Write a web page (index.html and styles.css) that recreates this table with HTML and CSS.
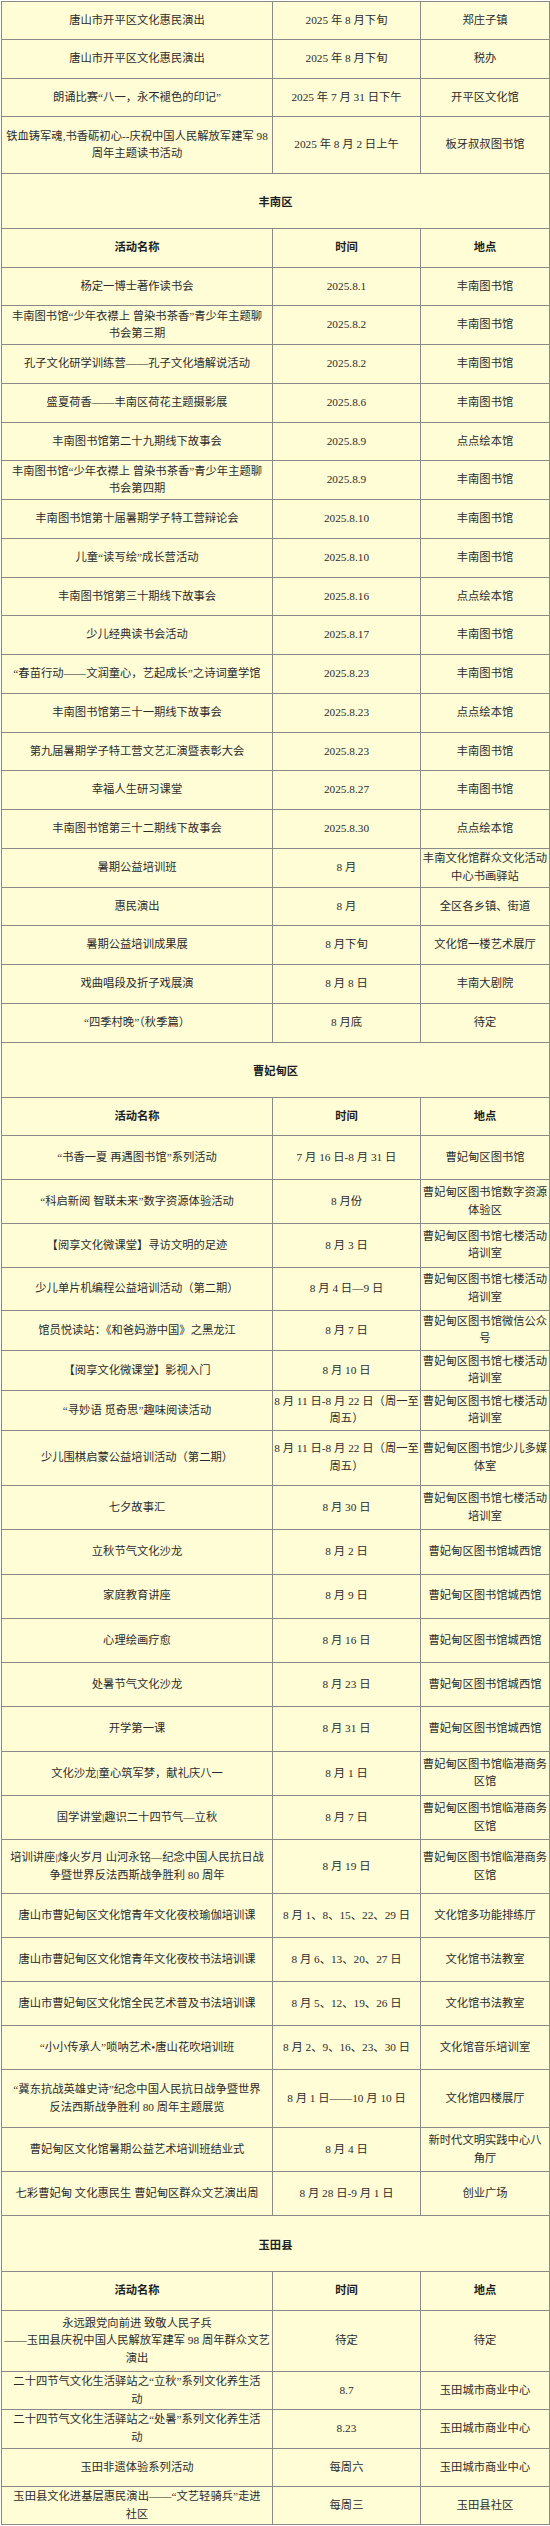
FILE: index.html
```html
<!DOCTYPE html>
<html lang="zh-CN">
<head>
<meta charset="utf-8">
<title>唐山市8月文化活动安排</title>
<link rel="stylesheet" href="styles.css">
</head>
<body>
<table class="schedule">
<colgroup><col class="c-name"><col class="c-time"><col class="c-place"></colgroup>
<tbody>
<tr class="h38"><td>唐山市开平区文化惠民演出</td><td>2025 年 8 月下旬</td><td>郑庄子镇</td></tr>
<tr class="h39"><td>唐山市开平区文化惠民演出</td><td>2025 年 8 月下旬</td><td>税办</td></tr>
<tr class="h38"><td>朗诵比赛“八一，永不褪色的印记”</td><td>2025 年 7 月 31 日下午</td><td>开平区文化馆</td></tr>
<tr class="h57"><td>铁血铸军魂,书香砺初心--庆祝中国人民解放军建军 98<br>周年主题读书活动</td><td>2025 年 8 月 2 日上午</td><td>板牙叔叔图书馆</td></tr>

<tr class="section h55"><td colspan="3">丰南区</td></tr>
<tr class="head h385"><td>活动名称</td><td>时间</td><td>地点</td></tr>
<tr class="fn"><td>杨定一博士著作读书会</td><td>2025.8.1</td><td>丰南图书馆</td></tr>
<tr class="fn"><td>丰南图书馆“少年衣襟上 曾染书茶香”青少年主题聊<br>书会第三期</td><td>2025.8.2</td><td>丰南图书馆</td></tr>
<tr class="fn"><td>孔子文化研学训练营——孔子文化墙解说活动</td><td>2025.8.2</td><td>丰南图书馆</td></tr>
<tr class="fn"><td>盛夏荷香——丰南区荷花主题摄影展</td><td>2025.8.6</td><td>丰南图书馆</td></tr>
<tr class="fn"><td>丰南图书馆第二十九期线下故事会</td><td>2025.8.9</td><td>点点绘本馆</td></tr>
<tr class="fn"><td>丰南图书馆“少年衣襟上 曾染书茶香”青少年主题聊<br>书会第四期</td><td>2025.8.9</td><td>丰南图书馆</td></tr>
<tr class="fn"><td>丰南图书馆第十届暑期学子特工营辩论会</td><td>2025.8.10</td><td>丰南图书馆</td></tr>
<tr class="fn"><td>儿童“读写绘”成长营活动</td><td>2025.8.10</td><td>丰南图书馆</td></tr>
<tr class="fn"><td>丰南图书馆第三十期线下故事会</td><td>2025.8.16</td><td>点点绘本馆</td></tr>
<tr class="fn"><td>少儿经典读书会活动</td><td>2025.8.17</td><td>丰南图书馆</td></tr>
<tr class="fn"><td>“春苗行动——文润童心，艺起成长”之诗词童学馆</td><td>2025.8.23</td><td>丰南图书馆</td></tr>
<tr class="fn"><td>丰南图书馆第三十一期线下故事会</td><td>2025.8.23</td><td>点点绘本馆</td></tr>
<tr class="fn"><td>第九届暑期学子特工营文艺汇演暨表彰大会</td><td>2025.8.23</td><td>丰南图书馆</td></tr>
<tr class="fn"><td>幸福人生研习课堂</td><td>2025.8.27</td><td>丰南图书馆</td></tr>
<tr class="fn"><td>丰南图书馆第三十二期线下故事会</td><td>2025.8.30</td><td>点点绘本馆</td></tr>
<tr class="fn"><td>暑期公益培训班</td><td>8 月</td><td>丰南文化馆群众文化活动<br>中心书画驿站</td></tr>
<tr class="fn"><td>惠民演出</td><td>8 月</td><td>全区各乡镇、街道</td></tr>
<tr class="fn"><td>暑期公益培训成果展</td><td>8 月下旬</td><td>文化馆一楼艺术展厅</td></tr>
<tr class="fn"><td>戏曲唱段及折子戏展演</td><td>8 月 8 日</td><td>丰南大剧院</td></tr>
<tr class="fn"><td>“四季村晚”（秋季篇）</td><td>8 月底</td><td>待定</td></tr>

<tr class="section h55"><td colspan="3">曹妃甸区</td></tr>
<tr class="head h385"><td>活动名称</td><td>时间</td><td>地点</td></tr>
<tr class="h44"><td>“书香一夏 再遇图书馆”系列活动</td><td>7 月 16 日-8 月 31 日</td><td>曹妃甸区图书馆</td></tr>
<tr class="h44"><td>“科启新阅 智联未来”数字资源体验活动</td><td>8 月份</td><td>曹妃甸区图书馆数字资源<br>体验区</td></tr>
<tr class="h437"><td>【阅享文化微课堂】寻访文明的足迹</td><td>8 月 3 日</td><td>曹妃甸区图书馆七楼活动<br>培训室</td></tr>
<tr class="h433"><td>少儿单片机编程公益培训活动（第二期）</td><td>8 月 4 日—9 日</td><td>曹妃甸区图书馆七楼活动<br>培训室</td></tr>
<tr class="h40"><td>馆员悦读站：《和爸妈游中国》之黑龙江</td><td>8 月 7 日</td><td>曹妃甸区图书馆微信公众<br>号</td></tr>
<tr class="h40"><td>【阅享文化微课堂】影视入门</td><td>8 月 10 日</td><td>曹妃甸区图书馆七楼活动<br>培训室</td></tr>
<tr class="h40"><td>“寻妙语 觅奇思”趣味阅读活动</td><td>8 月 11 日-8 月 22 日（周一至<br>周五）</td><td>曹妃甸区图书馆七楼活动<br>培训室</td></tr>
<tr class="h55"><td>少儿围棋启蒙公益培训活动（第二期）</td><td>8 月 11 日-8 月 22 日（周一至<br>周五）</td><td>曹妃甸区图书馆少儿多媒<br>体室</td></tr>
<tr class="h443"><td>七夕故事汇</td><td>8 月 30 日</td><td>曹妃甸区图书馆七楼活动<br>培训室</td></tr>
<tr class="h443"><td>立秋节气文化沙龙</td><td>8 月 2 日</td><td>曹妃甸区图书馆城西馆</td></tr>
<tr class="h443"><td>家庭教育讲座</td><td>8 月 9 日</td><td>曹妃甸区图书馆城西馆</td></tr>
<tr class="h443"><td>心理绘画疗愈</td><td>8 月 16 日</td><td>曹妃甸区图书馆城西馆</td></tr>
<tr class="h443"><td>处暑节气文化沙龙</td><td>8 月 23 日</td><td>曹妃甸区图书馆城西馆</td></tr>
<tr class="h443"><td>开学第一课</td><td>8 月 31 日</td><td>曹妃甸区图书馆城西馆</td></tr>
<tr class="h443"><td>文化沙龙|童心筑军梦，献礼庆八一</td><td>8 月 1 日</td><td>曹妃甸区图书馆临港商务<br>区馆</td></tr>
<tr class="h443"><td>国学讲堂|趣识二十四节气—立秋</td><td>8 月 7 日</td><td>曹妃甸区图书馆临港商务<br>区馆</td></tr>
<tr class="h54"><td>培训讲座|烽火岁月 山河永铭—纪念中国人民抗日战<br>争暨世界反法西斯战争胜利 80 周年</td><td>8 月 19 日</td><td>曹妃甸区图书馆临港商务<br>区馆</td></tr>
<tr class="h44"><td>唐山市曹妃甸区文化馆青年文化夜校瑜伽培训课</td><td>8 月 1、8、15、22、29 日</td><td>文化馆多功能排练厅</td></tr>
<tr class="h44"><td>唐山市曹妃甸区文化馆青年文化夜校书法培训课</td><td>8 月 6、13、20、27 日</td><td>文化馆书法教室</td></tr>
<tr class="h44"><td>唐山市曹妃甸区文化馆全民艺术普及书法培训课</td><td>8 月 5、12、19、26 日</td><td>文化馆书法教室</td></tr>
<tr class="h44"><td>“小小传承人”唢呐艺术•唐山花吹培训班</td><td>8 月 2、9、16、23、30 日</td><td>文化馆音乐培训室</td></tr>
<tr class="h58"><td>“冀东抗战英雄史诗”纪念中国人民抗日战争暨世界<br>反法西斯战争胜利 80 周年主题展览</td><td>8 月 1 日——10 月 10 日</td><td>文化馆四楼展厅</td></tr>
<tr class="h44"><td>曹妃甸区文化馆暑期公益艺术培训班结业式</td><td>8 月 4 日</td><td>新时代文明实践中心八<br>角厅</td></tr>
<tr class="h44"><td>七彩曹妃甸 文化惠民生 曹妃甸区群众文艺演出周</td><td>8 月 28 日-9 月 1 日</td><td>创业广场</td></tr>

<tr class="section h557"><td colspan="3">玉田县</td></tr>
<tr class="head h39"><td>活动名称</td><td>时间</td><td>地点</td></tr>
<tr class="h61"><td>永远跟党向前进 致敬人民子兵<br>——玉田县庆祝中国人民解放军建军 98 周年群众文艺<br>演出</td><td>待定</td><td>待定</td></tr>
<tr class="h383"><td>二十四节气文化生活驿站之“立秋”系列文化养生活<br>动</td><td>8.7</td><td>玉田城市商业中心</td></tr>
<tr class="h383"><td>二十四节气文化生活驿站之“处暑”系列文化养生活<br>动</td><td>8.23</td><td>玉田城市商业中心</td></tr>
<tr class="h383"><td>玉田非遗体验系列活动</td><td>每周六</td><td>玉田城市商业中心</td></tr>
<tr class="h383"><td>玉田县文化进基层惠民演出——“文艺轻骑兵”走进<br>社区</td><td>每周三</td><td>玉田县社区</td></tr>
</tbody>
</table>
</body>
</html>
```

FILE: styles.css
```css
html, body {
  margin: 0;
  padding: 0;
  background: #ffffff;
}

.schedule {
  border-collapse: collapse;
  table-layout: fixed;
  width: 548px;
  margin: 1px 0 0 1px;
  background: #fffdd6;
  font-family: "Liberation Serif", "Noto Sans CJK SC", serif;
  font-size: 11.3px;
  line-height: 17.5px;
  color: #2b2b2b;
}

.c-name { width: 271px; }
.c-time { width: 148px; }
.c-place { width: 129px; }

.schedule td {
  border: 1px solid #8a8a8a;
  text-align: center;
  vertical-align: middle;
  padding: 0 1px;
  white-space: nowrap;
  overflow: hidden;
}

.section td,
.head td {
  font-weight: bold;
  color: #1e1e1e;
}

.section td {
  padding-top: 4px;
}

.fn { height: 38.75px; }
.h38 { height: 38px; }
.h383 { height: 38.3px; }
.h385 { height: 38.5px; }
.h39 { height: 39px; }
.h40 { height: 40px; }
.h433 { height: 43.3px; }
.h437 { height: 43.7px; }
.h44 { height: 44px; }
.h443 { height: 44.3px; }
.h54 { height: 54px; }
.h55 { height: 55px; }
.h557 { height: 55.7px; }
.h57 { height: 57px; }
.h58 { height: 58px; }
.h61 { height: 61px; }
```
